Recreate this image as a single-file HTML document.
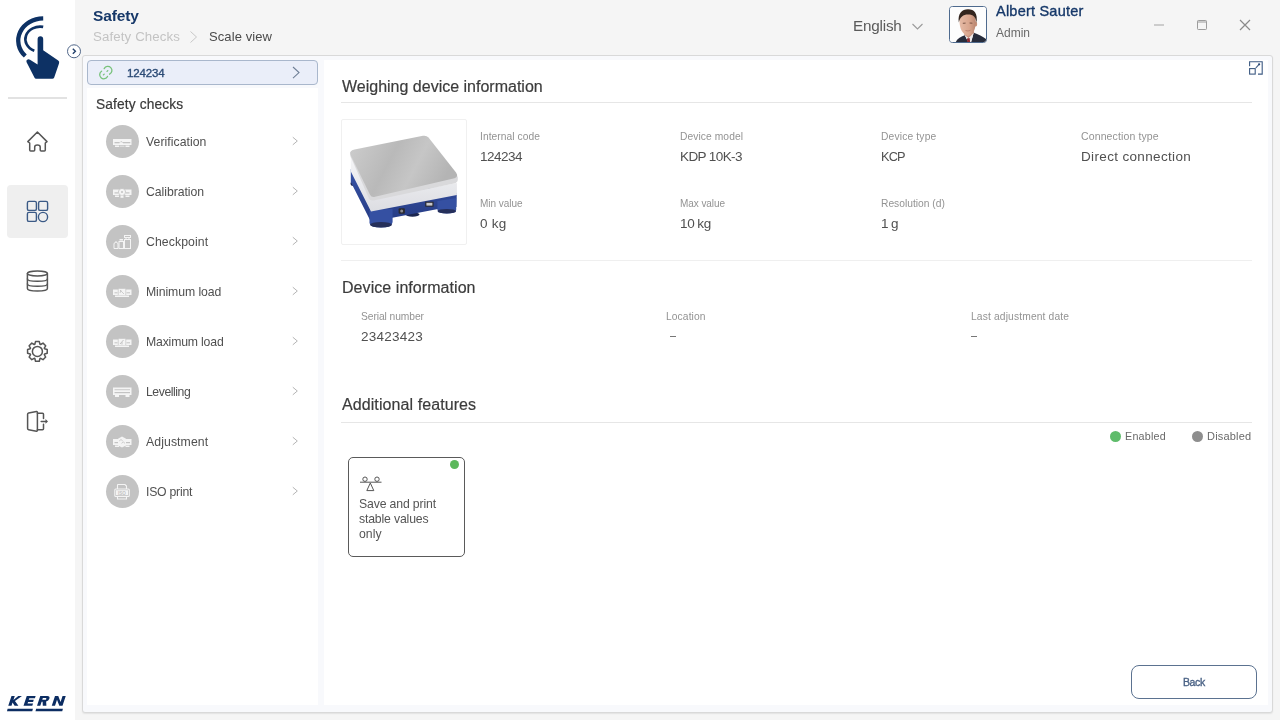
<!DOCTYPE html>
<html><head><meta charset="utf-8"><title>Safety - Scale view</title>
<style>
html,body{margin:0;padding:0;}
body{width:1280px;height:720px;position:relative;overflow:hidden;background:#f5f5f5;font-family:"Liberation Sans",sans-serif;}
.a{position:absolute;}
.t{position:absolute;white-space:nowrap;will-change:transform;}
svg.a{overflow:visible;}
#side{position:absolute;left:0;top:0;width:75px;height:720px;background:#fff;}
</style></head><body>
<div id="side"></div>
<div class="t" style="left:93.10px;top:6.60px;font-size:15.5px;line-height:17px;letter-spacing:-0.146px;color:#163869;font-weight:bold;">Safety</div>
<div class="t" style="left:92.80px;top:29.00px;font-size:13.25px;line-height:15px;letter-spacing:0.131px;color:#c3c3c3;">Safety Checks</div>
<div class="t" style="left:209.00px;top:29.00px;font-size:13.0px;line-height:15px;letter-spacing:0.091px;color:#4a4a4a;">Scale view</div>
<svg class="a" style="left:188px;top:30px" width="12" height="14"><polyline points="2.5,1.5 8.5,7 2.5,12.5" fill="none" stroke="#c8c8c8" stroke-width="1"/></svg>
<div class="t" style="left:853.20px;top:16.50px;font-size:15.25px;line-height:17px;letter-spacing:-0.203px;color:#5a5a5a;">English</div>
<svg class="a" style="left:910px;top:20px" width="16" height="12"><polyline points="2.5,4 7.5,9 12.5,4" fill="none" stroke="#9a9a9a" stroke-width="1.1"/></svg>
<div class="t" style="left:996.00px;top:2.80px;font-size:14.5px;line-height:16px;letter-spacing:0.223px;color:#163869;-webkit-text-stroke:0.35px #163869;">Albert Sauter</div>
<div class="t" style="left:996.00px;top:25.60px;font-size:12.0px;line-height:14px;letter-spacing:-0.005px;color:#6a6a6a;">Admin</div>
<div class="a" style="left:1154px;top:24px;width:9.5px;height:1.5px;background:#cccccc"></div>
<svg class="a" style="left:1196px;top:19px" width="12" height="12"><rect x="1.5" y="1.5" width="9" height="9" rx="0.8" fill="none" stroke="#9c9c9c" stroke-width="1"/><line x1="1.5" y1="3" x2="10.5" y2="3" stroke="#9c9c9c" stroke-width="1"/></svg>
<svg class="a" style="left:1239px;top:19px" width="12" height="12"><path d="M1,1 L11,11 M11,1 L1,11" stroke="#8a8a8a" stroke-width="1.2"/></svg>
<div class="a" style="left:949.2px;top:6.2px;width:37.6px;height:37.3px;border:1.2px solid #4e6a8e;border-radius:3.5px;background:#fff;overflow:hidden;box-sizing:border-box">
<svg width="36" height="36" viewBox="0 0 36 36" style="display:block;margin:-0.2px 0 0 -0.2px">
<defs><linearGradient id="skin" x1="0" y1="0" x2="1" y2="0"><stop offset="0" stop-color="#e6bba6"/><stop offset="0.6" stop-color="#d9a68e"/><stop offset="1" stop-color="#b98670"/></linearGradient></defs>
<rect width="36" height="36" fill="#fdfdfd"/>
<path d="M13.5,23 L23.5,23 L24.5,27.5 L18.5,31.5 L14.5,28 Z" fill="#c99480"/>
<path d="M5.5,36 C6.5,32 10,30 14.8,28.3 L18.8,36 Z" fill="#272c3b"/>
<path d="M23.8,25.8 C28,27.5 33,29.5 36,32 L36,36 L20.8,36 Z" fill="#272c3b"/>
<path d="M14.8,28.3 L18.5,31.2 L23.8,25.8 L20.8,36 L18.8,36 Z" fill="#eeeaea"/>
<path d="M17,31.5 L19.6,31 L20.3,36 L17.3,36 Z" fill="#8e2a30"/>
<ellipse cx="25.6" cy="17" rx="1.6" ry="2.6" fill="#c8927a"/>
<path d="M9.5,14 C9.5,8 13,5.5 17.8,5.5 C22.5,5.5 25.8,8 25.8,14 C25.8,21 24,27 18,29 C12.5,27.5 9.5,21.5 9.5,14 Z" fill="url(#skin)"/>
<path d="M8.8,15.5 C7.6,6.5 12,2.3 18,2.3 C24.5,2.3 27.8,6.5 26.6,16 C25.6,10 23.5,7.6 18,7.6 C13,7.6 10.2,10 8.8,15.5 Z" fill="#33251e"/>
<path d="M12.8,16.3 L15.6,16.1 M19.6,16 L22.4,16.2" stroke="#6e4a3c" stroke-width="0.9"/>
<path d="M15.5,23.5 Q18,24.6 20.5,23.3" stroke="#b07060" stroke-width="0.7" fill="none"/>
</svg></div>
<svg class="a" style="left:0;top:0" width="75" height="90" viewBox="0 0 75 90">
<path d="M43.2,18.4 A25.3,22.2 0 0 0 25.3,56" fill="none" stroke="#0d3164" stroke-width="4.3"/>
<path d="M43.2,26.9 A14.8,12.6 0 0 0 34.3,50.8" fill="none" stroke="#0d3164" stroke-width="2.6"/>
<path d="M37.6,39.2 Q37.6,36.3 40.4,36.3 Q43.2,36.3 43.2,39.2 L43.2,50.3 L58.2,60.5 Q59.8,61.8 59,63.4 L54.2,77.6 Q53.7,78.8 52.3,78.8 L36.2,78.8 Q34.9,78.8 34.4,77.6 L26.6,62.3 Q25.8,60.6 27.2,59.7 Q28.6,58.9 30,59.8 L37.6,64.5 Z" fill="#0d3164"/>
</svg>
<svg class="a" style="left:65px;top:43px" width="17" height="17"><circle cx="9" cy="8.3" r="6.5" fill="#fff" stroke="#52688a" stroke-width="1"/><polyline points="7.8,5.8 10.4,8.3 7.8,10.8" fill="none" stroke="#22406b" stroke-width="1.4"/></svg>
<div class="a" style="left:8px;top:97px;width:59px;height:1.5px;background:#e2e2e2"></div>
<div class="a" style="left:7px;top:185px;width:61px;height:53px;background:#efefef;border-radius:4px"></div>
<svg class="a" style="left:22px;top:126px" width="30" height="30"><path d="M5.8,15.6 L15.4,6 L25,15.6 L23.3,17 L23.3,24 Q23.3,25 22.3,25 L19.2,25 Q18.2,25 18.2,24 L18.2,21 Q18.2,19 15.4,19 Q12.7,19 12.7,21 L12.7,24 Q12.7,25 11.7,25 L8.7,25 Q7.7,25 7.7,24 L7.7,17 Z" fill="none" stroke="#555" stroke-width="1.5" stroke-linejoin="round" stroke-linecap="round"/></svg>
<svg class="a" style="left:22px;top:197px" width="30" height="30"><g fill="none" stroke="#3b5a86" stroke-width="1.4"><rect x="5.4" y="4.4" width="9" height="9" rx="1.5"/><rect x="16.6" y="4.4" width="9" height="9" rx="1.5"/><rect x="5.4" y="15.4" width="9" height="9" rx="1.5"/><circle cx="21" cy="20" r="4.6"/></g></svg>
<svg class="a" style="left:22px;top:265px" width="30" height="30"><g fill="none" stroke="#555" stroke-width="1.5" stroke-linejoin="round" stroke-linecap="round" stroke-width="1.4"><ellipse cx="15.4" cy="8.5" rx="10" ry="2.4"/><path d="M5.4,8.5 L5.4,23.5 Q5.4,26 15.4,26 Q25.4,26 25.4,23.5 L25.4,8.5"/><path d="M5.4,14 Q5.4,16.3 15.4,16.3 Q25.4,16.3 25.4,14"/><path d="M5.4,19 Q5.4,21.3 15.4,21.3 Q25.4,21.3 25.4,19"/></g></svg>
<svg class="a" style="left:22px;top:336px" width="30" height="30"><g fill="none" stroke="#555" stroke-width="1.5" stroke-linejoin="round" stroke-linecap="round" stroke-width="1.4"><path d="M22.55,12.83 L25.22,13.51 L25.22,17.29 L22.55,17.97 L22.28,18.64 L23.68,21.01 L21.01,23.68 L18.64,22.28 L17.97,22.55 L17.29,25.22 L13.51,25.22 L12.83,22.55 L12.16,22.28 L9.79,23.68 L7.12,21.01 L8.52,18.64 L8.25,17.97 L5.58,17.29 L5.58,13.51 L8.25,12.83 L8.52,12.16 L7.12,9.79 L9.79,7.12 L12.16,8.52 L12.83,8.25 L13.51,5.58 L17.29,5.58 L17.97,8.25 L18.64,8.52 L21.01,7.12 L23.68,9.79 L22.28,12.16Z"/><circle cx="15.4" cy="15.4" r="5"/></g></svg>
<svg class="a" style="left:22px;top:406px" width="30" height="30"><g fill="none" stroke="#555" stroke-width="1.5" stroke-linejoin="round" stroke-linecap="round" stroke-width="1.4"><path d="M5.6,8.2 Q5.6,7.2 6.6,7 L14.5,5.6 Q15.4,5.5 15.4,6.5 L15.4,24.3 Q15.4,25.3 14.5,25.2 L6.6,23.8 Q5.6,23.6 5.6,22.6 Z"/><path d="M15.4,7.3 L20.5,7.3 Q21.5,7.3 21.5,8.3 L21.5,12.5"/><path d="M21.5,18.3 L21.5,22.7 Q21.5,23.7 20.5,23.7 L15.4,23.7"/><path d="M19.2,15.4 L24,15.4"/></g><path d="M23.5,13 L26,15.4 L23.5,17.8 Z" fill="#555"/></svg>
<svg class="a" style="left:0;top:690px" width="75" height="25" viewBox="0 690 75 25">
<g fill="#0c2d62" fill-rule="evenodd" transform="translate(3.25,696) skewX(-18.43)">
<path d="M8.25,0 H11.5 V3.9 L15,0 H18.7 L13.4,5.1 L18.4,9.75 H14.6 L11.5,6.6 V9.75 H8.25 Z"/>
<path d="M23.5,0 H32.4 V2.2 H26.8 V3.85 H31.8 V5.9 H26.8 V7.55 H32.3 V9.75 H23.5 Z"/>
<path d="M37,0 H44 Q47,0 47,2.7 Q47,5 44.7,5.5 L46.4,9.75 H42.8 L41.3,5.8 H40.3 V9.75 H37 Z M40.3,2.1 H43.2 Q44,2.1 44,2.9 Q44,3.8 43.2,3.8 H40.3 Z"/>
<path d="M51.75,0 H55 L59.3,6 V0 H62.5 V9.75 H59.3 L55,3.75 V9.75 H51.75 Z"/>
</g>
<path d="M7.6,708.75 L32.9,708.75 L32.25,711.25 L7,711.25 Z M36.1,708.75 L62.9,708.75 L62.25,711.25 L35.5,711.25 Z" fill="#0c2d62"/>
</svg>
<div class="a" style="left:82px;top:55px;width:1191px;height:658px;background:#f8f9fc;border:1px solid #d9d9d9;border-radius:3px;box-sizing:border-box;box-shadow:0 1px 1.5px rgba(0,0,0,0.08)"></div>
<div class="a" style="left:87px;top:88px;width:231px;height:617px;background:#fff"></div>
<div class="a" style="left:324px;top:60px;width:944px;height:645px;background:#fff"></div>
<div class="a" style="left:86.5px;top:60px;width:231px;height:25px;background:#eaeef9;border:1px solid #a9b7cc;border-radius:4px;box-sizing:border-box"></div>
<svg class="a" style="left:94px;top:62px" width="24" height="22" viewBox="94 62 24 22"><g fill="none" stroke="#78c27b" stroke-width="1.3" stroke-linecap="round"><path d="M104.2,68.6 A4.1,4.1 0 1 1 109.6,74.2"/><path d="M101.6,71.2 A4.1,4.1 0 1 0 107.5,76.4"/><path d="M107,71.4 L107.8,70.6 M103.4,74.9 L104.2,74.1"/></g></svg>
<div class="t" style="left:127.00px;top:67.00px;font-size:11.5px;line-height:12px;letter-spacing:-0.155px;color:#2b4a75;-webkit-text-stroke:0.35px #2b4a75;">124234</div>
<svg class="a" style="left:290px;top:64px" width="12" height="17"><polyline points="3,3 9,8.6 3,14.2" fill="none" stroke="#6f7f96" stroke-width="1.1"/></svg>
<div class="t" style="left:95.60px;top:96.80px;font-size:13.75px;line-height:15px;letter-spacing:0.134px;color:#3a3a3a;-webkit-text-stroke:0.2px #3a3a3a;">Safety checks</div>
<div class="a" style="left:106px;top:124.75px;width:33px;height:33px;border-radius:50%;background:#c3c3c3"></div>
<div class="t" style="left:146.40px;top:134.65px;font-size:12.25px;line-height:14px;letter-spacing:0.043px;color:#505050;">Verification</div>
<svg class="a" style="left:104px;top:123.00px" width="36" height="36" viewBox="0 0 36 36"><rect x="9" y="16" width="18.5" height="6" fill="#f4f4f4"/><rect x="11" y="22.5" width="4" height="1.5" fill="#f4f4f4"/><rect x="21.5" y="22.5" width="4" height="1.5" fill="#f4f4f4"/><rect x="15.5" y="22.8" width="5" height="0.7" fill="#f4f4f4"/><rect x="10.5" y="19" width="5" height="1.3" fill="#c3c3c3"/><rect x="19" y="19" width="7.3" height="1.3" fill="#c3c3c3"/><path d="M15.8,19.6 L17,18.4 L18.8,19.6" stroke="#c3c3c3" stroke-width="0.8" fill="none"/></svg>
<svg class="a" style="left:290px;top:135.25px" width="10" height="12"><polyline points="2.8,2.2 7.3,6 2.8,9.8" fill="none" stroke="#b5b5b5" stroke-width="1"/></svg>
<div class="a" style="left:106px;top:174.75px;width:33px;height:33px;border-radius:50%;background:#c3c3c3"></div>
<div class="t" style="left:146.40px;top:184.65px;font-size:12.25px;line-height:14px;letter-spacing:-0.055px;color:#505050;">Calibration</div>
<svg class="a" style="left:104px;top:173.00px" width="36" height="36" viewBox="0 0 36 36"><rect x="9" y="16.5" width="18.5" height="5.5" fill="#f4f4f4"/><rect x="11" y="22.5" width="4" height="1.5" fill="#f4f4f4"/><rect x="21.5" y="22.5" width="4" height="1.5" fill="#f4f4f4"/><circle cx="18" cy="19" r="3.6" fill="#f4f4f4" stroke="#c3c3c3" stroke-width="0.8"/><circle cx="18" cy="19" r="1" fill="#c3c3c3"/><rect x="10.5" y="19.3" width="3.5" height="1.2" fill="#c3c3c3"/><rect x="22" y="19.3" width="3.5" height="1.2" fill="#c3c3c3"/><rect x="16.5" y="22.5" width="3" height="2.3" fill="#f4f4f4"/></svg>
<svg class="a" style="left:290px;top:185.25px" width="10" height="12"><polyline points="2.8,2.2 7.3,6 2.8,9.8" fill="none" stroke="#b5b5b5" stroke-width="1"/></svg>
<div class="a" style="left:106px;top:224.75px;width:33px;height:33px;border-radius:50%;background:#c3c3c3"></div>
<div class="t" style="left:146.40px;top:234.65px;font-size:12.25px;line-height:14px;letter-spacing:0.090px;color:#505050;">Checkpoint</div>
<svg class="a" style="left:104px;top:223.00px" width="36" height="36" viewBox="0 0 36 36"><g fill="none" stroke="#f4f4f4" stroke-width="1"><path d="M10,25.5 L10,21 Q10,19.5 11.5,19.5 L12.5,19.5 Q14,19.5 14,21 L14,25.5 Z"/><rect x="15" y="18.5" width="4.5" height="7"/><rect x="20.5" y="16.5" width="6" height="9"/><path d="M22,16.5 L22,14.5 M25,16.5 L25,14.5"/><rect x="20.5" y="12.5" width="6" height="2"/><path d="M15.5,18 L19,18 M15.5,16.5 L19,16.5"/></g><rect x="11.5" y="18" width="1" height="1.5" fill="#f4f4f4"/></svg>
<svg class="a" style="left:290px;top:235.25px" width="10" height="12"><polyline points="2.8,2.2 7.3,6 2.8,9.8" fill="none" stroke="#b5b5b5" stroke-width="1"/></svg>
<div class="a" style="left:106px;top:274.75px;width:33px;height:33px;border-radius:50%;background:#c3c3c3"></div>
<div class="t" style="left:146.40px;top:284.65px;font-size:12.25px;line-height:14px;letter-spacing:-0.086px;color:#505050;">Minimum load</div>
<svg class="a" style="left:104px;top:273.00px" width="36" height="36" viewBox="0 0 36 36"><rect x="9" y="16.5" width="5.5" height="5.5" fill="#f4f4f4"/><rect x="21.5" y="16.5" width="6" height="5.5" fill="#f4f4f4"/><rect x="14.2" y="15.5" width="7.6" height="7" rx="1" fill="#f4f4f4" stroke="#c3c3c3" stroke-width="0.6"/><path d="M16,17 L20,21 M16,20 L17,17" stroke="#c3c3c3" stroke-width="0.8"/><rect x="11" y="22.5" width="14" height="1.5" fill="#f4f4f4"/><rect x="10.5" y="19.3" width="3" height="1" fill="#c3c3c3"/><rect x="22.5" y="19.3" width="3.5" height="1" fill="#c3c3c3"/></svg>
<svg class="a" style="left:290px;top:285.25px" width="10" height="12"><polyline points="2.8,2.2 7.3,6 2.8,9.8" fill="none" stroke="#b5b5b5" stroke-width="1"/></svg>
<div class="a" style="left:106px;top:324.75px;width:33px;height:33px;border-radius:50%;background:#c3c3c3"></div>
<div class="t" style="left:146.40px;top:334.65px;font-size:12.25px;line-height:14px;letter-spacing:-0.177px;color:#505050;">Maximum load</div>
<svg class="a" style="left:104px;top:323.00px" width="36" height="36" viewBox="0 0 36 36"><rect x="9" y="16.5" width="5.5" height="5.5" fill="#f4f4f4"/><rect x="21.5" y="16.5" width="6" height="5.5" fill="#f4f4f4"/><rect x="14.2" y="15.5" width="7.6" height="7" rx="1" fill="#f4f4f4" stroke="#c3c3c3" stroke-width="0.6"/><path d="M16,21 L19.5,17 M18,19 L18,21.5" stroke="#c3c3c3" stroke-width="1"/><rect x="11" y="22.5" width="14" height="1.5" fill="#f4f4f4"/><rect x="10.5" y="19.3" width="3" height="1" fill="#c3c3c3"/><rect x="22.5" y="19.3" width="3.5" height="1" fill="#c3c3c3"/></svg>
<svg class="a" style="left:290px;top:335.25px" width="10" height="12"><polyline points="2.8,2.2 7.3,6 2.8,9.8" fill="none" stroke="#b5b5b5" stroke-width="1"/></svg>
<div class="a" style="left:106px;top:374.75px;width:33px;height:33px;border-radius:50%;background:#c3c3c3"></div>
<div class="t" style="left:146.40px;top:384.65px;font-size:12.25px;line-height:14px;letter-spacing:-0.456px;color:#505050;">Levelling</div>
<svg class="a" style="left:104px;top:373.00px" width="36" height="36" viewBox="0 0 36 36"><rect x="9" y="14.5" width="18.5" height="7.5" fill="#f4f4f4"/><rect x="10.5" y="16.3" width="15.5" height="0.9" fill="#c3c3c3"/><rect x="10.5" y="19" width="15.5" height="1.2" fill="#c3c3c3"/><rect x="11" y="22" width="4" height="2" fill="#f4f4f4"/><rect x="21.5" y="22" width="4" height="2" fill="#f4f4f4"/></svg>
<svg class="a" style="left:290px;top:385.25px" width="10" height="12"><polyline points="2.8,2.2 7.3,6 2.8,9.8" fill="none" stroke="#b5b5b5" stroke-width="1"/></svg>
<div class="a" style="left:106px;top:424.75px;width:33px;height:33px;border-radius:50%;background:#c3c3c3"></div>
<div class="t" style="left:146.40px;top:434.65px;font-size:12.25px;line-height:14px;letter-spacing:0.092px;color:#505050;">Adjustment</div>
<svg class="a" style="left:104px;top:423.00px" width="36" height="36" viewBox="0 0 36 36"><rect x="9" y="16" width="18.5" height="6" fill="#f4f4f4"/><path d="M14,15.8 L18,13.5 L22,15.8 L22,22.5 L18,24.5 L14,22.5 Z" fill="#f4f4f4"/><path d="M15.2,18 L17,16.5 L18.8,18 M17.5,20.3 L19.3,19 L21,20.3" stroke="#c3c3c3" stroke-width="0.8" fill="none"/><rect x="10.5" y="19" width="3.5" height="1.2" fill="#c3c3c3"/><rect x="22" y="19" width="4" height="1.2" fill="#c3c3c3"/><rect x="11" y="22.5" width="4" height="1.5" fill="#f4f4f4"/><rect x="21.5" y="22.5" width="4" height="1.5" fill="#f4f4f4"/></svg>
<svg class="a" style="left:290px;top:435.25px" width="10" height="12"><polyline points="2.8,2.2 7.3,6 2.8,9.8" fill="none" stroke="#b5b5b5" stroke-width="1"/></svg>
<div class="a" style="left:106px;top:474.75px;width:33px;height:33px;border-radius:50%;background:#c3c3c3"></div>
<div class="t" style="left:146.40px;top:484.65px;font-size:12.25px;line-height:14px;letter-spacing:-0.242px;color:#505050;">ISO print</div>
<svg class="a" style="left:104px;top:473.00px" width="36" height="36" viewBox="0 0 36 36"><g fill="none" stroke="#f4f4f4" stroke-width="1.1"><path d="M13.5,16 L13.5,12 Q13.5,11.5 14,11.5 L21,11.5 L22.5,13 L22.5,16"/><rect x="10.8" y="16" width="14.5" height="7.5" rx="1"/><path d="M13.5,23.5 L13.5,26 L22.5,26 L22.5,23.5"/></g><rect x="12" y="17.2" width="12" height="5" fill="#f4f4f4"/><text x="18" y="21.6" font-family="Liberation Sans" font-weight="bold" font-size="4.6" fill="#c3c3c3" text-anchor="middle">ISO</text></svg>
<svg class="a" style="left:290px;top:485.25px" width="10" height="12"><polyline points="2.8,2.2 7.3,6 2.8,9.8" fill="none" stroke="#b5b5b5" stroke-width="1"/></svg>
<svg class="a" style="left:1240px;top:55px" width="30" height="25" viewBox="1240 55 30 25"><g fill="none" stroke="#3d5a82" stroke-width="1.1"><path d="M1249.6,66.2 V61.8 H1262.2 V74.1 H1258"/><rect x="1249.6" y="68.6" width="5.6" height="5.5"/><path d="M1255.8,68 L1258.6,64.9"/></g><circle cx="1259.1" cy="64.3" r="1.15" fill="#2c4a75"/></svg>
<div class="t" style="left:342.10px;top:78.10px;font-size:16.0px;line-height:17px;letter-spacing:-0.000px;color:#3c3c3c;-webkit-text-stroke:0.2px #3c3c3c;">Weighing device information</div>
<div class="a" style="left:341px;top:102px;width:911px;height:1px;background:#e6e6e6"></div>
<div class="a" style="left:340.5px;top:118.5px;width:126px;height:126px;border:1px solid #f0f0f0;border-radius:2px;box-sizing:border-box;background:#fff"></div>
<svg class="a" style="left:340px;top:118px" width="127" height="127" viewBox="340 118 127 127">
<defs>
<linearGradient id="plat" x1="0" y1="0" x2="1" y2="0.3"><stop offset="0" stop-color="#cecece"/><stop offset="0.45" stop-color="#b9b9b9"/><stop offset="0.7" stop-color="#c6c6c6"/><stop offset="1" stop-color="#b4b4b4"/></linearGradient>
<linearGradient id="blue" x1="0" y1="0" x2="0" y2="1"><stop offset="0" stop-color="#3853a6"/><stop offset="1" stop-color="#263c85"/></linearGradient>
<linearGradient id="wht" x1="0" y1="0" x2="0" y2="1"><stop offset="0" stop-color="#f6f6f8"/><stop offset="1" stop-color="#dcdde2"/></linearGradient>
</defs>
<ellipse cx="353.5" cy="183.5" rx="3" ry="2.5" fill="#1c2650"/>
<ellipse cx="412.5" cy="214.5" rx="7" ry="2.2" fill="#1c2650"/>
<path d="M350.8,169 L350.8,182 L370,220 L391,218 L438,209 L456.5,207 L456.8,193 Z" fill="url(#blue)"/>
<path d="M369.5,210 L369.5,223 Q370,227.5 381,227.5 Q392.5,227.5 392.6,222 L392.6,209 Z" fill="#3550a2"/>
<ellipse cx="381" cy="224.8" rx="11" ry="2.8" fill="#252f5a"/>
<path d="M437.4,201 L437.4,210 Q438,213.5 446.8,213.5 Q456,213.5 456.2,210 L456.2,198 Z" fill="#3550a2"/>
<ellipse cx="446.8" cy="211.2" rx="9.2" ry="2.3" fill="#252f5a"/>
<path d="M350.8,156 L350.8,171.5 L371,211.5 L456.9,195.1 L456.9,183 L371,199 Z" fill="url(#wht)"/>
<path d="M350.3,152 L350.3,155.5 Q350.5,157 351.5,158.5 L369,198.5 Q370.3,201 373.5,200.5 L454,183.5 Q457.8,182.5 457.8,179.5 L457.8,176.5 Z" fill="#d9d9db"/>
<path d="M354.5,149.5 L423,135.8 Q426.5,135.2 428.5,137.6 L456,172.5 Q459,176.8 454.5,178.2 L375,196.8 Q371.5,197.6 370,194.8 L350.6,155 Q348.8,150.8 354.5,149.5 Z" fill="url(#plat)"/>
<rect x="398.6" y="208.3" width="6.3" height="5.4" rx="1" fill="#2a2a30"/>
<circle cx="401.7" cy="211" r="1.5" fill="#8a8a90"/>
<rect x="425.2" y="201.7" width="8.4" height="5" fill="#2a2a30"/>
<rect x="426.4" y="202.8" width="6" height="2.8" fill="#c8c8cc"/>
</svg>
<div class="t" style="left:479.50px;top:131.00px;font-size:10.25px;line-height:11px;letter-spacing:0.061px;color:#939393;">Internal code</div>
<div class="t" style="left:680.00px;top:131.00px;font-size:10.25px;line-height:11px;letter-spacing:0.082px;color:#939393;">Device model</div>
<div class="t" style="left:880.50px;top:131.00px;font-size:10.25px;line-height:11px;letter-spacing:0.164px;color:#939393;">Device type</div>
<div class="t" style="left:1081.20px;top:130.00px;font-size:10.5px;line-height:12px;letter-spacing:0.123px;color:#939393;">Connection type</div>
<div class="t" style="left:479.50px;top:148.75px;font-size:13.5px;line-height:15px;letter-spacing:-0.510px;color:#505050;">124234</div>
<div class="t" style="left:680.00px;top:148.75px;font-size:13.5px;line-height:15px;letter-spacing:-0.598px;color:#505050;">KDP 10K-3</div>
<div class="t" style="left:880.50px;top:148.75px;font-size:12.75px;line-height:15px;letter-spacing:-0.857px;color:#505050;">KCP</div>
<div class="t" style="left:1081.20px;top:148.75px;font-size:13.5px;line-height:15px;letter-spacing:0.344px;color:#505050;">Direct connection</div>
<div class="t" style="left:479.50px;top:197.75px;font-size:10.0px;line-height:11px;letter-spacing:-0.038px;color:#939393;">Min value</div>
<div class="t" style="left:680.00px;top:197.75px;font-size:10.0px;line-height:11px;letter-spacing:-0.072px;color:#939393;">Max value</div>
<div class="t" style="left:880.50px;top:197.75px;font-size:10.25px;line-height:11px;letter-spacing:0.007px;color:#939393;">Resolution (d)</div>
<div class="t" style="left:479.50px;top:215.50px;font-size:13.5px;line-height:15px;letter-spacing:0.245px;color:#505050;">0 kg</div>
<div class="t" style="left:680.00px;top:215.50px;font-size:13.5px;line-height:15px;letter-spacing:-0.300px;color:#505050;word-spacing:-0.60px;">10 kg</div>
<div class="t" style="left:880.50px;top:215.50px;font-size:13.5px;line-height:15px;letter-spacing:-0.300px;color:#505050;word-spacing:-0.60px;">1 g</div>
<div class="a" style="left:341px;top:260px;width:911px;height:1px;background:#efefef"></div>
<div class="t" style="left:341.50px;top:279.00px;font-size:16.0px;line-height:17px;letter-spacing:0.059px;color:#3c3c3c;-webkit-text-stroke:0.2px #3c3c3c;">Device information</div>
<div class="t" style="left:361.25px;top:311.00px;font-size:10.25px;line-height:11px;letter-spacing:-0.067px;color:#939393;">Serial number</div>
<div class="t" style="left:361.25px;top:328.50px;font-size:13.5px;line-height:15px;letter-spacing:0.241px;color:#505050;">23423423</div>
<div class="t" style="left:666.20px;top:311.00px;font-size:10.25px;line-height:11px;letter-spacing:0.106px;color:#939393;">Location</div>
<div class="t" style="left:970.70px;top:311.00px;font-size:10.25px;line-height:11px;letter-spacing:0.149px;color:#939393;">Last adjustment date</div>
<div class="a" style="left:670px;top:335.5px;width:6px;height:1.2px;background:#777"></div>
<div class="a" style="left:971px;top:335.5px;width:6px;height:1.2px;background:#777"></div>
<div class="t" style="left:341.90px;top:396.00px;font-size:16.0px;line-height:17px;letter-spacing:0.087px;color:#3c3c3c;-webkit-text-stroke:0.2px #3c3c3c;">Additional features</div>
<div class="a" style="left:341px;top:422px;width:911px;height:1px;background:#e6e6e6"></div>
<div class="a" style="left:1109.7px;top:430.6px;width:11px;height:11px;border-radius:50%;background:#5fbc6b"></div>
<div class="t" style="left:1125.30px;top:430.00px;font-size:10.75px;line-height:12px;letter-spacing:0.208px;color:#6a6a6a;">Enabled</div>
<div class="a" style="left:1191.7px;top:430.6px;width:11px;height:11px;border-radius:50%;background:#8e8e8e"></div>
<div class="t" style="left:1207.30px;top:430.00px;font-size:11.0px;line-height:12px;letter-spacing:0.186px;color:#6a6a6a;">Disabled</div>
<div class="a" style="left:348px;top:456.5px;width:117px;height:100px;border:1px solid #5a5a5a;border-radius:5px;box-sizing:border-box"></div>
<div class="a" style="left:449.9px;top:460.4px;width:9px;height:9px;border-radius:50%;background:#5cb85c"></div>
<svg class="a" style="left:358px;top:474px" width="25" height="19"><g fill="none" stroke="#555" stroke-width="1"><circle cx="7" cy="5.2" r="2.2"/><circle cx="19" cy="5.2" r="2.2"/><line x1="2" y1="8.2" x2="23.5" y2="8.2"/><path d="M12.3,9 L8.8,16.6 L15.8,16.6 Z"/></g></svg>
<div class="t" style="left:358.90px;top:496.80px;font-size:12.25px;line-height:14px;letter-spacing:-0.146px;color:#555;">Save and print</div>
<div class="t" style="left:358.90px;top:511.90px;font-size:12.25px;line-height:14px;letter-spacing:-0.159px;color:#555;">stable values</div>
<div class="t" style="left:358.90px;top:526.50px;font-size:12.25px;line-height:14px;letter-spacing:0.045px;color:#555;">only</div>
<div class="a" style="left:1131px;top:665px;width:126px;height:34px;border:1.6px solid #5b7290;border-radius:8px;box-sizing:border-box;background:#fff"></div>
<div class="t" style="left:1182.80px;top:676.10px;font-size:10.5px;line-height:12px;letter-spacing:-0.387px;color:#4a6285;-webkit-text-stroke:0.35px #4a6285;">Back</div>
</body></html>
